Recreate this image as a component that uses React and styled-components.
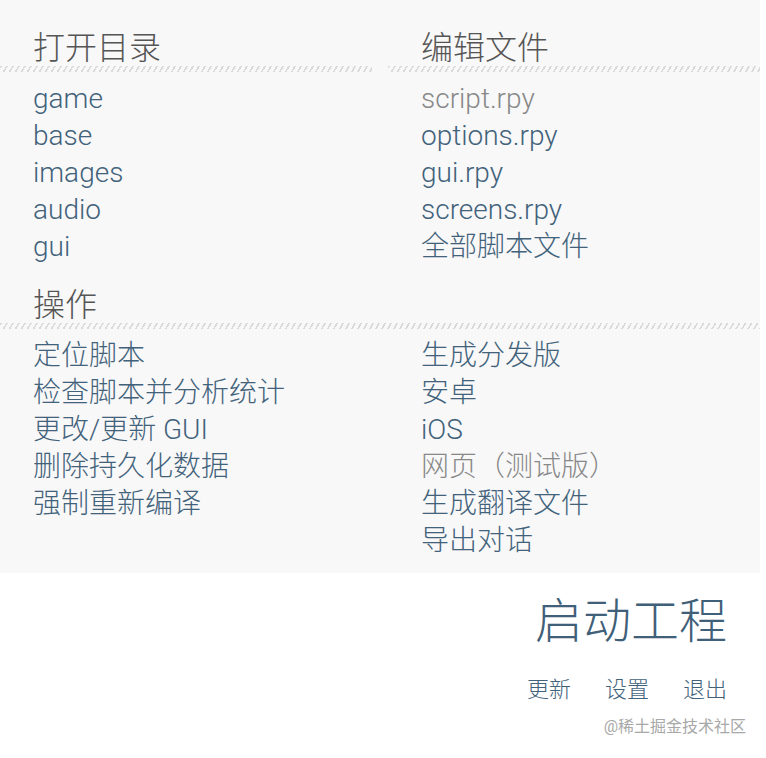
import React from 'react';
import styled, { createGlobalStyle } from 'styled-components';

const GlobalStyle = createGlobalStyle`
  html, body {
    margin: 0;
    padding: 0;
    background: #ffffff;
  }
  body {
    font-family: "Roboto", "Noto Sans CJK SC", sans-serif;
  }
`

const Page = styled.div`
  width: 766px;
  height: 758px;
  position: relative;
  overflow: hidden;
  background: #fff;
`

const Panel = styled.div`
  width: 760px;
  background: #f8f8f8;
  padding: 30px 0 14px;
  box-sizing: border-box;
`

const Row = styled.div`
  display: grid;
  grid-template-columns: 372px 372px;
  column-gap: 16px;
`

const Section = styled.div`
  display: flex;
  flex-direction: column;
`

const Wide = styled.div`
  display: flex;
  flex-direction: column;
  margin-top: 22px;
`

const Heading = styled.h3`
  margin: 0;
  padding-left: 33px;
  font-size: 32px;
  font-weight: 300;
  line-height: 36px;
  height: 36px;
  color: #555555;
`

const Hatch = styled.div`
  height: 6px;
  background: repeating-linear-gradient(
    120deg,
    #d9d9d9 0px,
    #d9d9d9 1.6px,
    transparent 1.6px,
    transparent 5.2px
  );
`

const List = styled.div`
  display: flex;
  flex-direction: column;
  padding: 8px 0 0 33px;
`

const Item = styled.div`
  font-size: 28px;
  font-weight: 300;
  line-height: 37px;
  height: 37px;
  white-space: nowrap;
  color: ${p => (p.$off ? '#888888' : '#42627b')};
`

const Footer = styled.div`
  display: flex;
  flex-direction: column;
  align-items: flex-end;
  padding-right: 39px;
`

const Launch = styled.div`
  font-size: 48px;
  font-weight: 300;
  line-height: 60px;
  margin-top: 19px;
  color: #3f6078;
`

const Links = styled.div`
  display: flex;
  gap: 34px;
  margin-top: 24px;
`

const SmallLink = styled.span`
  font-size: 22px;
  font-weight: 300;
  line-height: 28px;
  color: #42627b;
`

const Watermark = styled.div`
  position: absolute;
  right: 20px;
  bottom: 20px;
  font-size: 16px;
  line-height: 22px;
  color: #a8a8a8;
`

const dirs = ['game', 'base', 'images', 'audio', 'gui']
const files = [
  { name: 'script.rpy', off: true },
  { name: 'options.rpy' },
  { name: 'gui.rpy' },
  { name: 'screens.rpy' },
  { name: '全部脚本文件' },
]
const actionsLeft = ['定位脚本', '检查脚本并分析统计', '更改/更新 GUI', '删除持久化数据', '强制重新编译']
const actionsRight = [
  { name: '生成分发版' },
  { name: '安卓' },
  { name: 'iOS' },
  { name: '网页（测试版）', off: true },
  { name: '生成翻译文件' },
  { name: '导出对话' },
]

export default function App() {
  return (
    <Page>
      <GlobalStyle />
      <Panel>
        <Row>
          <Section>
            <Heading>打开目录</Heading>
            <Hatch />
            <List>
              {dirs.map(d => <Item key={d}>{d}</Item>)}
            </List>
          </Section>
          <Section>
            <Heading>编辑文件</Heading>
            <Hatch />
            <List>
              {files.map(f => <Item key={f.name} $off={f.off}>{f.name}</Item>)}
            </List>
          </Section>
        </Row>
        <Wide>
          <Heading>操作</Heading>
          <Hatch />
          <Row>
            <List>
              {actionsLeft.map(a => <Item key={a}>{a}</Item>)}
            </List>
            <List>
              {actionsRight.map(a => <Item key={a.name} $off={a.off}>{a.name}</Item>)}
            </List>
          </Row>
        </Wide>
      </Panel>
      <Footer>
        <Launch>启动工程</Launch>
        <Links>
          <SmallLink>更新</SmallLink>
          <SmallLink>设置</SmallLink>
          <SmallLink>退出</SmallLink>
        </Links>
      </Footer>
      <Watermark>@稀土掘金技术社区</Watermark>
    </Page>
  )
}
